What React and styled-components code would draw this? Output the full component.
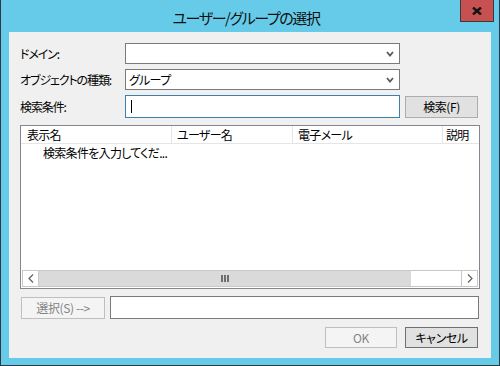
import React from "react";
import styled, { createGlobalStyle } from "styled-components";

const GlobalStyle = createGlobalStyle`
  html, body {
    margin: 0;
    padding: 0;
    background: #ffffff;
  }
  body {
    font-family: "Noto Sans CJK JP", "Noto Sans", sans-serif;
    font-size: 12px;
    letter-spacing: -0.7px;
    color: #000;
    font-feature-settings: "palt";
  }
`;

const Window = styled.div`
  width: 500px;
  height: 366px;
  box-sizing: border-box;
  background: #65cbe9;
  border: 1px solid #2f3a40;
  border-top: none;
  display: flex;
  flex-direction: column;
`;

const TitleBar = styled.div`
  height: 32px;
  flex-shrink: 0;
  display: grid;
  grid-template-columns: 1fr auto 1fr;
  align-items: start;
`;

const Title = styled.div`
  grid-column: 2;
  font-size: 15px;
  letter-spacing: -1.4px;
  line-height: 18px;
  margin: 9px 8px 0 0;
  color: #111;
  white-space: nowrap;
`;

const CloseButton = styled.div`
  grid-column: 3;
  justify-self: end;
  width: 34px;
  height: 22px;
  margin-right: 5px;
  box-sizing: border-box;
  background: #c75050;
  border: 1px solid #3a3a3a;
  border-top: none;
  display: flex;
  align-items: center;
  justify-content: center;
`;

const Client = styled.div`
  flex: 1;
  margin: 0 8px 7px 8px;
  background: #f0f0f0;
  padding: 11px 11px 0 11px;
  display: flex;
  flex-direction: column;
`;

const Form = styled.div`
  display: grid;
  grid-template-columns: 100px 275px 73px;
  column-gap: 5px;
  row-gap: 5px;
  align-items: center;
`;

const Label = styled.div`
  grid-column: 1;
  line-height: 16px;
  letter-spacing: -1.1px;
  white-space: nowrap;
`;

const Combo = styled.div`
  grid-column: 2;
  height: 21px;
  box-sizing: border-box;
  border: 1px solid #7a7a7a;
  background: #fff;
  display: flex;
  align-items: center;
  padding: 0 5px 0 3px;
  line-height: 16px;
`;

const ComboText = styled.span`
  flex: 1;
`;

const TextBox = styled.div`
  grid-column: ${(p) => p.$col || 2};
  height: ${(p) => p.$h || 23}px;
  width: ${(p) => (p.$w ? `${p.$w}px` : "auto")};
  box-sizing: border-box;
  border: 1px solid ${(p) => (p.$focused ? "#3c7fb1" : "#7a7a7a")};
  background: #fff;
  display: flex;
  align-items: center;
  padding-left: 5px;
`;

const Caret = styled.span`
  width: 1px;
  height: 13px;
  background: #000;
`;

const Button = styled.div`
  width: ${(p) => p.$w || 73}px;
  height: ${(p) => p.$h || 21}px;
  box-sizing: border-box;
  background: ${(p) => (p.$disabled ? "#f4f4f4" : "#e1e1e1")};
  border: 1px solid
    ${(p) => (p.$disabled ? "#bfbfbf" : p.$default ? "#707070" : "#adadad")};
  color: ${(p) => (p.$disabled ? "#838383" : "#000")};
  display: flex;
  align-items: center;
  justify-content: center;
  line-height: 16px;
  letter-spacing: -0.4px;
  white-space: nowrap;
  align-self: ${(p) => p.$align || "center"};
`;

const List = styled.div`
  margin-top: 7px;
  height: 164px;
  box-sizing: border-box;
  border: 1px solid #828790;
  background: #fff;
  display: flex;
  flex-direction: column;
  overflow: hidden;
`;

const Header = styled.div`
  height: 18px;
  box-sizing: border-box;
  border-bottom: 1px solid #e5e5e5;
  display: flex;
  flex-shrink: 0;
`;

const HeaderCell = styled.div`
  width: ${(p) => (p.$w ? `${p.$w}px` : "auto")};
  flex: ${(p) => (p.$w ? "none" : 1)};
  box-sizing: border-box;
  padding-left: ${(p) => p.$pad || 5}px;
  border-right: ${(p) => (p.$w ? "1px solid #e5e5e5" : "none")};
  line-height: 17px;
  white-space: nowrap;
  overflow: hidden;
`;

const ListBody = styled.div`
  flex: 1;
`;

const Row = styled.div`
  height: 17px;
  line-height: 17px;
  padding-left: 22px;
  white-space: nowrap;
`;

const ScrollBar = styled.div`
  height: 17px;
  margin: 0 1px 1px 1px;
  box-sizing: border-box;
  border-top: 1px solid #c8c8c8;
  border-bottom: 1px solid #c8c8c8;
  display: flex;
  flex-shrink: 0;
`;

const ArrowButton = styled.div`
  width: 17px;
  box-sizing: border-box;
  background: #fff;
  border-left: 1px solid #c8c8c8;
  border-right: 1px solid #c8c8c8;
  display: flex;
  align-items: center;
  justify-content: center;
`;

const Thumb = styled.div`
  width: 372px;
  background: #dadada;
  display: flex;
  align-items: center;
  justify-content: center;
  gap: 1px;
`;

const Grip = styled.span`
  width: 2px;
  height: 7px;
  background: #6e6e6e;
`;

const Track = styled.div`
  flex: 1;
  background: #fff;
`;

const PickRow = styled.div`
  margin-top: 7px;
  display: flex;
  align-items: flex-end;
  gap: 5px;
  padding-left: 1px;
`;

const ActionRow = styled.div`
  margin-top: 8px;
  display: flex;
  justify-content: flex-end;
  gap: 8px;
  padding-right: 2px;
`;

const Chevron = () => (
  <svg width="8" height="6" viewBox="0 0 8 6">
    <polyline points="1,1 4,4.5 7,1" fill="none" stroke="#5a5a5a" strokeWidth="1.8" />
  </svg>
);

const Arrow = ({ dir }) => (
  <svg width="6" height="9" viewBox="0 0 6 9">
    <polyline
      points={dir === "left" ? "5,0.5 1,4.5 5,8.5" : "1,0.5 5,4.5 1,8.5"}
      fill="none"
      stroke="#606060"
      strokeWidth="1.2"
    />
  </svg>
);

const CloseIcon = () => (
  <svg width="10" height="8" viewBox="0 0 10 8">
    <path d="M1 0.5 L9 7.5 M9 0.5 L1 7.5" stroke="#141414" strokeWidth="2.4" />
  </svg>
);

const columns = [
  { title: "表示名", w: 151, pad: 6 },
  { title: "ユーザー名", w: 121 },
  { title: "電子メール", w: 150 },
  { title: "説明", pad: 3 },
];

export default function App() {
  return (
    <>
      <GlobalStyle />
      <Window>
        <TitleBar>
          <Title>ユーザー/グループの選択</Title>
          <CloseButton>
            <CloseIcon />
          </CloseButton>
        </TitleBar>
        <Client>
          <Form>
            <Label>ドメイン:</Label>
            <Combo>
              <ComboText />
              <Chevron />
            </Combo>
            <span />
            <Label>オブジェクトの種類:</Label>
            <Combo>
              <ComboText>グループ</ComboText>
              <Chevron />
            </Combo>
            <span />
            <Label>検索条件:</Label>
            <TextBox $focused>
              <Caret />
            </TextBox>
            <Button $h={22} $align="end">検索(F)</Button>
          </Form>
          <List>
            <Header>
              {columns.map((c) => (
                <HeaderCell key={c.title} $w={c.w} $pad={c.pad}>
                  {c.title}
                </HeaderCell>
              ))}
            </Header>
            <ListBody>
              <Row>検索条件を入力してくだ...</Row>
            </ListBody>
            <ScrollBar>
              <ArrowButton>
                <Arrow dir="left" />
              </ArrowButton>
              <Thumb>
                <Grip />
                <Grip />
                <Grip />
              </Thumb>
              <Track />
              <ArrowButton>
                <Arrow dir="right" />
              </ArrowButton>
            </ScrollBar>
          </List>
          <PickRow>
            <Button $w={84} $h={22} $disabled>
              選択(S) --&gt;
            </Button>
            <TextBox $w={369} />
          </PickRow>
          <ActionRow>
            <Button $w={72} $disabled>
              OK
            </Button>
            <Button $default>キャンセル</Button>
          </ActionRow>
        </Client>
      </Window>
    </>
  );
}
